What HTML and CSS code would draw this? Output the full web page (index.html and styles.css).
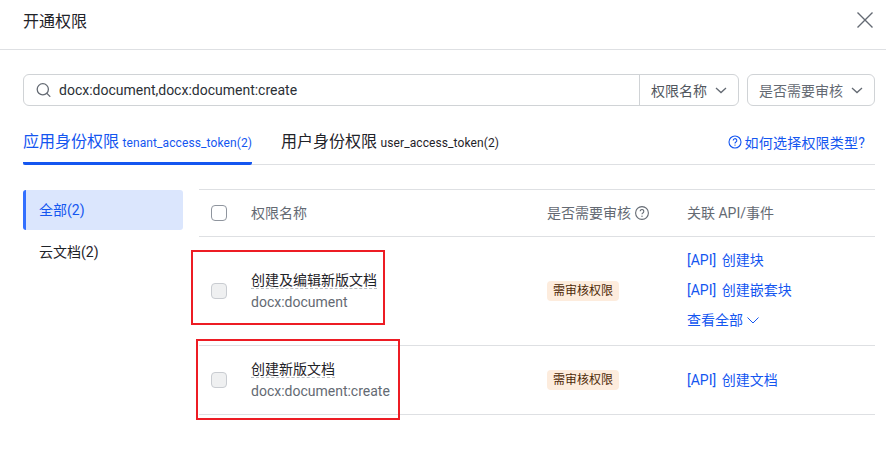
FILE: index.html
```html
<!DOCTYPE html>
<html lang="zh-CN">
<head>
<meta charset="utf-8">
<title>开通权限</title>
<link rel="stylesheet" href="styles.css">
</head>
<body>
<div class="dialog">
  <header class="head">
    <h1 class="title">开通权限</h1>
    <svg class="close" viewBox="0 0 18 18" width="18" height="18"><path d="M1.5 1.5l15 15M16.5 1.5l-15 15" fill="none" stroke="#646a73" stroke-width="1.4"/></svg>
  </header>
  <div class="body">
    <div class="filters">
      <div class="search">
        <svg class="search-icon" viewBox="0 0 16 16" width="16" height="16"><circle cx="6.8" cy="7.3" r="5.6" fill="none" stroke="#646a73" stroke-width="1.3"/><path d="M10.9 11.4l3 3" stroke="#646a73" stroke-width="1.3" stroke-linecap="round"/></svg>
        <span class="query">docx:document,docx:document:create</span>
        <div class="field-select"><span>权限名称</span><svg class="chev" viewBox="0 0 12 12" width="12" height="12"><path d="M1 4l5 4.6L11 4" fill="none" stroke="#646a73" stroke-width="1.3"/></svg></div>
      </div>
      <div class="audit-select"><span>是否需要审核</span><svg class="chev" viewBox="0 0 12 12" width="12" height="12"><path d="M1 4l5 4.6L11 4" fill="none" stroke="#646a73" stroke-width="1.3"/></svg></div>
    </div>
    <div class="tabs">
      <div class="tab active"><span class="tab-main">应用身份权限</span> <span class="tab-sub">tenant_access_token(2)</span></div>
      <div class="tab"><span class="tab-main">用户身份权限</span> <span class="tab-sub">user_access_token(2)</span></div>
      <a class="help"><svg viewBox="0 0 14 14" width="14" height="14"><circle cx="7" cy="7" r="6" fill="none" stroke="#1456f0" stroke-width="1.1"/><path d="M5.2 5.5a1.8 1.8 0 1 1 2.7 1.5c-.6.4-.9.7-.9 1.4" fill="none" stroke="#1456f0" stroke-width="1.1"/><circle cx="7" cy="10.1" r=".7" fill="#1456f0"/></svg><span>如何选择权限类型?</span></a>
    </div>
    <div class="content">
      <nav class="side">
        <div class="side-item selected">全部(2)</div>
        <div class="side-item">云文档(2)</div>
      </nav>
      <div class="table">
        <div class="row row-head">
          <span class="check"></span>
          <span class="c-name">权限名称</span>
          <span class="c-audit">是否需要审核<svg viewBox="0 0 14 14" width="14" height="14"><circle cx="7" cy="7" r="6.4" fill="none" stroke="#646a73" stroke-width="1.1"/><path d="M5.2 5.3a1.8 1.8 0 1 1 2.7 1.6c-.6.4-.9.7-.9 1.4" fill="none" stroke="#646a73" stroke-width="1.1"/><circle cx="7" cy="10.2" r=".7" fill="#646a73"/></svg></span>
          <span class="c-api">关联 API/事件</span>
        </div>
        <div class="row row-one">
          <span class="check disabled"></span>
          <div class="c-name"><div class="perm-name"><span>创建及编辑新版文档</span></div><div class="perm-key">docx:document</div></div>
          <div class="c-audit"><span class="badge">需审核权限</span></div>
          <div class="c-api links links-many"><a>[API] 创建块</a><a>[API] 创建嵌套块</a><a>查看全部<svg viewBox="0 0 12 12" width="12" height="12"><path d="M.5 3.5L6 9l5.5-5.5" fill="none" stroke="#1456f0" stroke-width="1"/></svg></a></div>
        </div>
        <div class="row row-two">
          <span class="check disabled"></span>
          <div class="c-name"><div class="perm-name"><span>创建新版文档</span></div><div class="perm-key">docx:document:create</div></div>
          <div class="c-audit"><span class="badge">需审核权限</span></div>
          <div class="c-api links"><a>[API] 创建文档</a></div>
        </div>
      </div>
    </div>
  </div>
  <div class="mark mark-one"></div>
  <div class="mark mark-two"></div>
</div>
</body>
</html>
```
FILE: styles.css
```css
* { box-sizing: border-box; }
html, body { margin: 0; padding: 0; background: #fff; }
body { font-family: Roboto, "Noto Sans CJK SC", sans-serif; color: #1f2329; font-size: 14px; }
.dialog { position: relative; width: 886px; height: 461px; overflow: hidden; }
.head { height: 50px; border-bottom: 1px solid #dee0e3; padding: 0 12px 0 23px; display: flex; align-items: flex-start; justify-content: space-between; }
.title { margin: 10px 0 0; font-size: 16px; font-weight: 400; line-height: 24px; }
.close { margin-top: 11px; }
.body { padding: 24px 11px 0 23px; }
.filters { display: flex; gap: 8px; height: 32px; }
.search { width: 716px; display: flex; align-items: center; border: 1px solid #d0d3d6; border-radius: 6px; padding-left: 12px; }
.search-icon { flex: none; }
.query { flex: 1; margin-left: 7px; color: #2b2f36; font-size: 14px; line-height: 20px; }
.field-select { width: 99px; height: 100%; border-left: 1px solid #d0d3d6; padding: 0 11px; display: flex; align-items: center; justify-content: space-between; color: #51565d; white-space: nowrap; }
.field-select span { font-size: 14px; }
.audit-select { flex: 1; border: 1px solid #d0d3d6; border-radius: 6px; padding: 0 11px; display: flex; align-items: center; justify-content: space-between; color: #646a73; }
.tabs { margin-top: 14px; height: 45px; display: flex; gap: 29px; border-bottom: 1px solid #dee0e3; position: relative; }
.tab { height: 45px; line-height: 44px; white-space: nowrap; }
.tab.active { color: #1456f0; border-bottom: 3px solid #1456f0; border-radius: 0 0 2px 2px; }
.tab-main { font-size: 16px; }
.tab-sub { font-size: 12px; letter-spacing: .1px; }
.help { margin-left: auto; margin-right: 10px; display: flex; align-items: center; gap: 3px; color: #1456f0; font-size: 14px; height: 44px; }
.help span { letter-spacing: .2px; }
.content { display: flex; gap: 16px; margin-top: 24px; }
.side { width: 160px; padding-top: 1px; }
.side-item { height: 40px; line-height: 40px; padding-left: 16px; margin-bottom: 2px; font-size: 14px; color: #1f2329; }
.side-item.selected { background: #dbe6fd; color: #1456f0; border-left: 3px solid #3370ff; padding-left: 13px; border-radius: 3px; }
.table { flex: 1; border-top: 1px solid #dee0e3; }
.row { display: grid; grid-template-columns: 52px 296px 140px 1fr; align-items: center; border-bottom: 1px solid #dee0e3; }
.row-head { height: 47px; color: #646a73; font-size: 14px; line-height: 20px; }
.row-one { height: 109px; }
.row-two { height: 69px; }
.check { width: 16px; height: 16px; margin-left: 12px; border: 1px solid #8f959e; border-radius: 4px; background: #fff; }
.check.disabled { border-color: #c9ccd1; background: #eff0f1; }
.c-audit { display: flex; align-items: center; gap: 4px; }
.c-audit svg { flex: none; }
.perm-name { height: 20px; font-size: 14px; color: #1f2329; }
.perm-name span { display: block; width: fit-content; height: 19px; line-height: 21px; border-bottom: 1px dashed #bbbfc4; }
.perm-key { margin-top: 2px; line-height: 20px; font-size: 14px; color: #646a73; }
.badge { display: inline-block; height: 20px; line-height: 20px; padding: 0 6px; border-radius: 4px; background: #fdecdd; color: #4e2a08; font-size: 12px; }
.links { display: flex; flex-direction: column; gap: 10px; color: #1456f0; font-size: 14px; line-height: 20px; word-spacing: 2px; }
.links-many { padding-bottom: 2px; }
.links a { display: flex; align-items: center; gap: 4px; }
.mark { position: absolute; border: 2px solid #ed1c24; }
.mark-one { left: 191px; top: 250px; width: 194px; height: 75px; }
.mark-two { left: 196px; top: 339px; width: 204px; height: 81px; }
```
